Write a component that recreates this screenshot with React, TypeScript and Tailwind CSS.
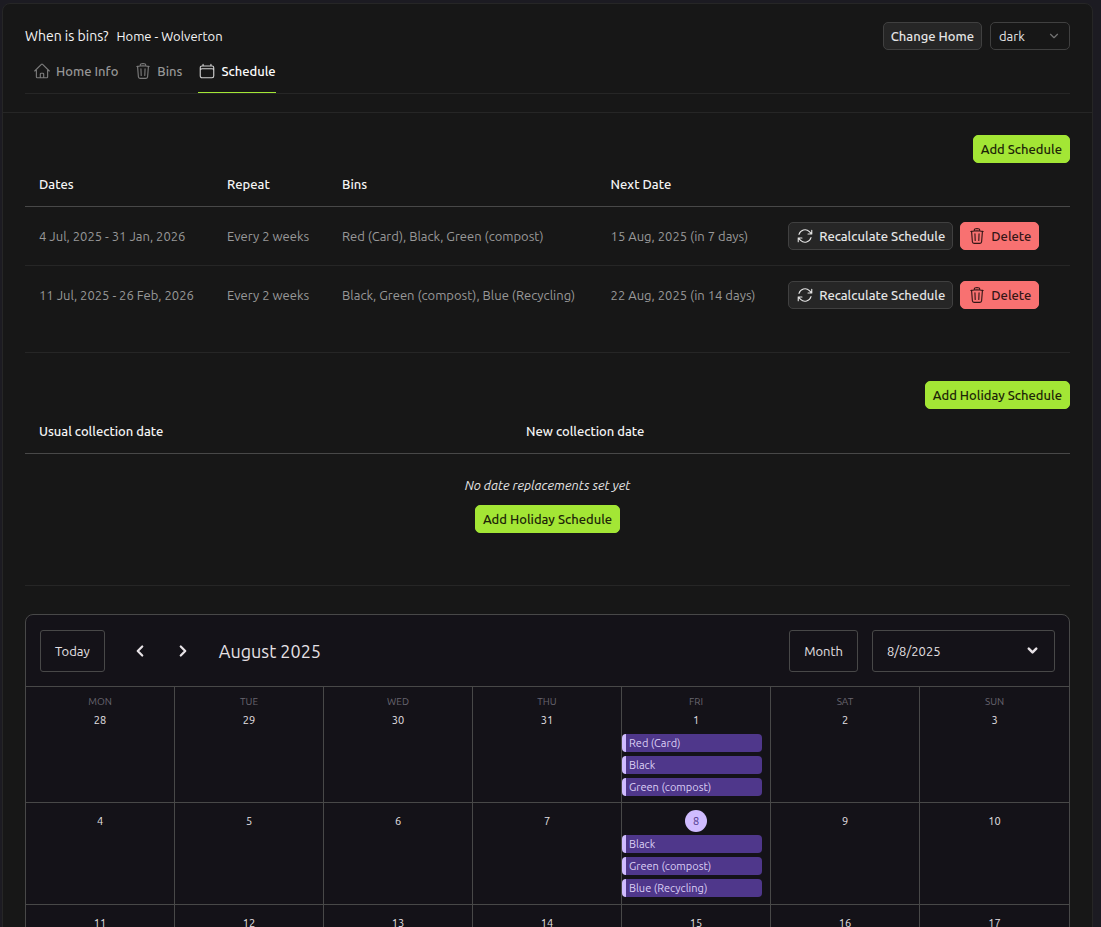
import { type ButtonHTMLAttributes } from "react";
import { HiOutlineArrowPath, HiOutlineCalendar, HiOutlineHome, HiOutlineTrash } from "react-icons/hi2";
import { ChevronDown, ChevronLeft, ChevronRight } from "lucide-react";
import clsx from "clsx";

type Variant = "primary" | "neutral" | "danger";

const variants: Record<Variant, string> = {
  primary: "border-[#a3e635] bg-[#a3e635] text-[#1c2407]",
  neutral: "border-[#404040] bg-[#262626] text-neutral-200",
  danger: "border-[#f87171] bg-[#f87171] text-[#331616]",
};

function Button({ variant, children, ...rest }: { variant: Variant } & ButtonHTMLAttributes<HTMLButtonElement>) {
  return (
    <button
      type="button"
      className={clsx(
        "inline-flex h-7 items-center gap-[5px] rounded-[5px] border px-[7px] font-medium whitespace-nowrap",
        variants[variant],
      )}
      {...rest}
    >
      {children}
    </button>
  );
}

const tabs = [
  { label: "Home Info", icon: HiOutlineHome, active: false },
  { label: "Bins", icon: HiOutlineTrash, active: false },
  { label: "Schedule", icon: HiOutlineCalendar, active: true },
];

const schedules = [
  {
    dates: "4 Jul, 2025 - 31 Jan, 2026",
    repeat: "Every 2 weeks",
    bins: "Red (Card), Black, Green (compost)",
    next: "15 Aug, 2025 (in 7 days)",
  },
  {
    dates: "11 Jul, 2025 - 26 Feb, 2026",
    repeat: "Every 2 weeks",
    bins: "Black, Green (compost), Blue (Recycling)",
    next: "22 Aug, 2025 (in 14 days)",
  },
];

const weekdays = ["MON", "TUE", "WED", "THU", "FRI", "SAT", "SUN"];

const weeks = [
  [28, 29, 30, 31, 1, 2, 3],
  [4, 5, 6, 7, 8, 9, 10],
  [11, 12, 13, 14, 15, 16, 17],
];

const events: Record<number, string[]> = {
  1: ["Red (Card)", "Black", "Green (compost)"],
  8: ["Black", "Green (compost)", "Blue (Recycling)"],
};

const TODAY = 8;

function Header() {
  return (
    <header className="border-b border-[#262626] px-[22px] pt-[18px] pb-[18px]">
      <div className="flex items-center justify-between">
        <div className="flex items-baseline gap-2 text-neutral-100">
          <h1 className="text-[14px] leading-5">When is bins?</h1>
          <span>Home - Wolverton</span>
        </div>
        <div className="flex gap-2">
          <Button variant="neutral">Change Home</Button>
          <div className="relative">
            <select
              aria-label="Theme"
              defaultValue="dark"
              className="h-7 w-20 appearance-none rounded-[5px] border border-[#404040] bg-[#171717] px-2 text-neutral-200"
            >
              <option>dark</option>
            </select>
            <ChevronDown
              className="pointer-events-none absolute top-[7px] right-[9px] size-[14px] text-neutral-500"
              strokeWidth={2}
            />
          </div>
        </div>
      </div>
      <nav className="flex gap-4 border-b border-[#262626] pl-2">
        {tabs.map(({ label, icon: Icon, active }) => (
          <a
            key={label}
            href="#"
            className={clsx(
              "flex h-[43px] items-center gap-[5px] border-b font-medium",
              active ? "border-[#a3e635] text-white" : "border-transparent text-[#969696]",
            )}
          >
            <Icon className="size-[18px] opacity-80" />
            {label}
          </a>
        ))}
      </nav>
    </header>
  );
}

function ScheduleTable() {
  return (
    <section className="border-b border-[#262626] pb-[28px]">
      <div className="flex justify-end">
        <Button variant="primary">Add Schedule</Button>
      </div>
      <table className="w-full table-fixed text-left">
        <colgroup>
          <col className="w-[18%]" />
          <col className="w-[11%]" />
          <col className="w-[25.7%]" />
          <col className="w-[17%]" />
          <col />
        </colgroup>
        <thead>
          <tr className="h-[43px] border-b border-[#484848] text-neutral-100">
            <th className="pl-3.5 font-medium">Dates</th>
            <th className="pl-3.5 font-medium">Repeat</th>
            <th className="pl-3.5 font-medium">Bins</th>
            <th className="pl-3.5 font-medium">Next Date</th>
            <td />
          </tr>
        </thead>
        <tbody className="text-[#999999]">
          {schedules.map((s) => (
            <tr key={s.dates} className="h-[59px] border-b border-[#262626] whitespace-nowrap last:border-b-0">
              <td className="pl-3.5">{s.dates}</td>
              <td className="pl-3.5">{s.repeat}</td>
              <td className="pl-3.5">{s.bins}</td>
              <td className="pl-3.5">{s.next}</td>
              <td className="pl-3.5">
                <div className="flex gap-[7px]">
                  <Button variant="neutral">
                    <HiOutlineArrowPath className="size-[18px]" />
                    Recalculate Schedule
                  </Button>
                  <Button variant="danger">
                    <HiOutlineTrash className="size-[18px]" />
                    Delete
                  </Button>
                </div>
              </td>
            </tr>
          ))}
        </tbody>
      </table>
    </section>
  );
}

function HolidayTable() {
  return (
    <section className="border-b border-[#262626] pt-[28px] pb-[52px]">
      <div className="flex justify-end">
        <Button variant="primary">Add Holiday Schedule</Button>
      </div>
      <table className="w-full table-fixed text-left">
        <colgroup>
          <col className="w-[46.6%]" />
          <col />
        </colgroup>
        <thead>
          <tr className="h-11 border-b border-[#484848] text-neutral-100">
            <th className="pl-3.5 font-medium">Usual collection date</th>
            <th className="pl-3.5 font-medium">New collection date</th>
          </tr>
        </thead>
        <tbody>
          <tr>
            <td colSpan={2} className="pt-[22px]">
              <div className="flex flex-col items-center gap-[11px]">
                <p className="text-neutral-200 italic">No date replacements set yet</p>
                <Button variant="primary">Add Holiday Schedule</Button>
              </div>
            </td>
          </tr>
        </tbody>
      </table>
    </section>
  );
}

const outlined = "flex h-[42px] items-center rounded-[3px] border border-[#484848] px-3.5";

function Calendar() {
  return (
    <section className="mt-[28px] overflow-hidden rounded-lg border border-[#484848] bg-[#141218] text-[#e6e1e5]">
      <div className="flex items-center justify-between border-b border-[#484848] px-3.5 pt-[15px] pb-3.5 leading-5">
        <div className="flex items-center">
          <button type="button" className={outlined}>
            Today
          </button>
          <div className="ml-3.5 flex">
            <button type="button" aria-label="Previous" className="flex h-10 w-[43px] items-center justify-center">
              <ChevronLeft className="size-[18px]" strokeWidth={3} />
            </button>
            <button type="button" aria-label="Next" className="flex h-10 w-[43px] items-center justify-center">
              <ChevronRight className="size-[18px]" strokeWidth={3} />
            </button>
          </div>
          <h2 className="ml-3.5 text-[18px]">August 2025</h2>
        </div>
        <div className="flex gap-3.5">
          <button type="button" className={outlined}>
            Month
          </button>
          <button type="button" className={clsx(outlined, "w-[183px] justify-between")}>
            8/8/2025
            <ChevronDown className="size-[15px]" strokeWidth={4} />
          </button>
        </div>
      </div>
      {weeks.map((week, w) => (
        <div
          key={week[0]}
          className={clsx(
            "grid grid-cols-7 divide-x divide-[#484848] border-b border-[#484848] last:border-b-0",
            w === 0 ? "min-h-[116px]" : "min-h-[102px]",
          )}
        >
          {week.map((day, d) => (
            <div key={day} className="pt-[7px]">
              {w === 0 && (
                <div className="h-[15px] text-center text-[10px] leading-[15px] text-[#68656f]">{weekdays[d]}</div>
              )}
              <div className="flex justify-center">
                <span
                  className={clsx(
                    "flex size-[22px] items-center justify-center rounded-full text-[11px]",
                    w === 1 && day === TODAY && "bg-[#d0bcff] text-[#4f378b]",
                  )}
                >
                  {day}
                </span>
              </div>
              {w < 2 && events[day] && (
                <ul className="mt-[3px] flex flex-col gap-1 pr-2 leading-[18px]">
                  {events[day].map((name) => (
                    <li
                      key={name}
                      className="h-[18px] rounded-[4px] border-l-4 border-[#d0bcff] bg-[#4f378b] pl-[3px] text-[11px] text-[#dccff5]"
                    >
                      {name}
                    </li>
                  ))}
                </ul>
              )}
            </div>
          ))}
        </div>
      ))}
    </section>
  );
}

export default function App() {
  return (
    <div className="h-screen overflow-hidden bg-[#1c1b22] pt-[3px] pr-2 pl-0.5 font-['Ubuntu','Noto_Sans',sans-serif] text-[13px] leading-[18px]">
      <main className="rounded-lg border border-[#262626] bg-[#171717]">
        <Header />
        <div className="px-[22px] pt-[22px] pb-[22px]">
          <ScheduleTable />
          <HolidayTable />
          <Calendar />
        </div>
      </main>
    </div>
  );
}
